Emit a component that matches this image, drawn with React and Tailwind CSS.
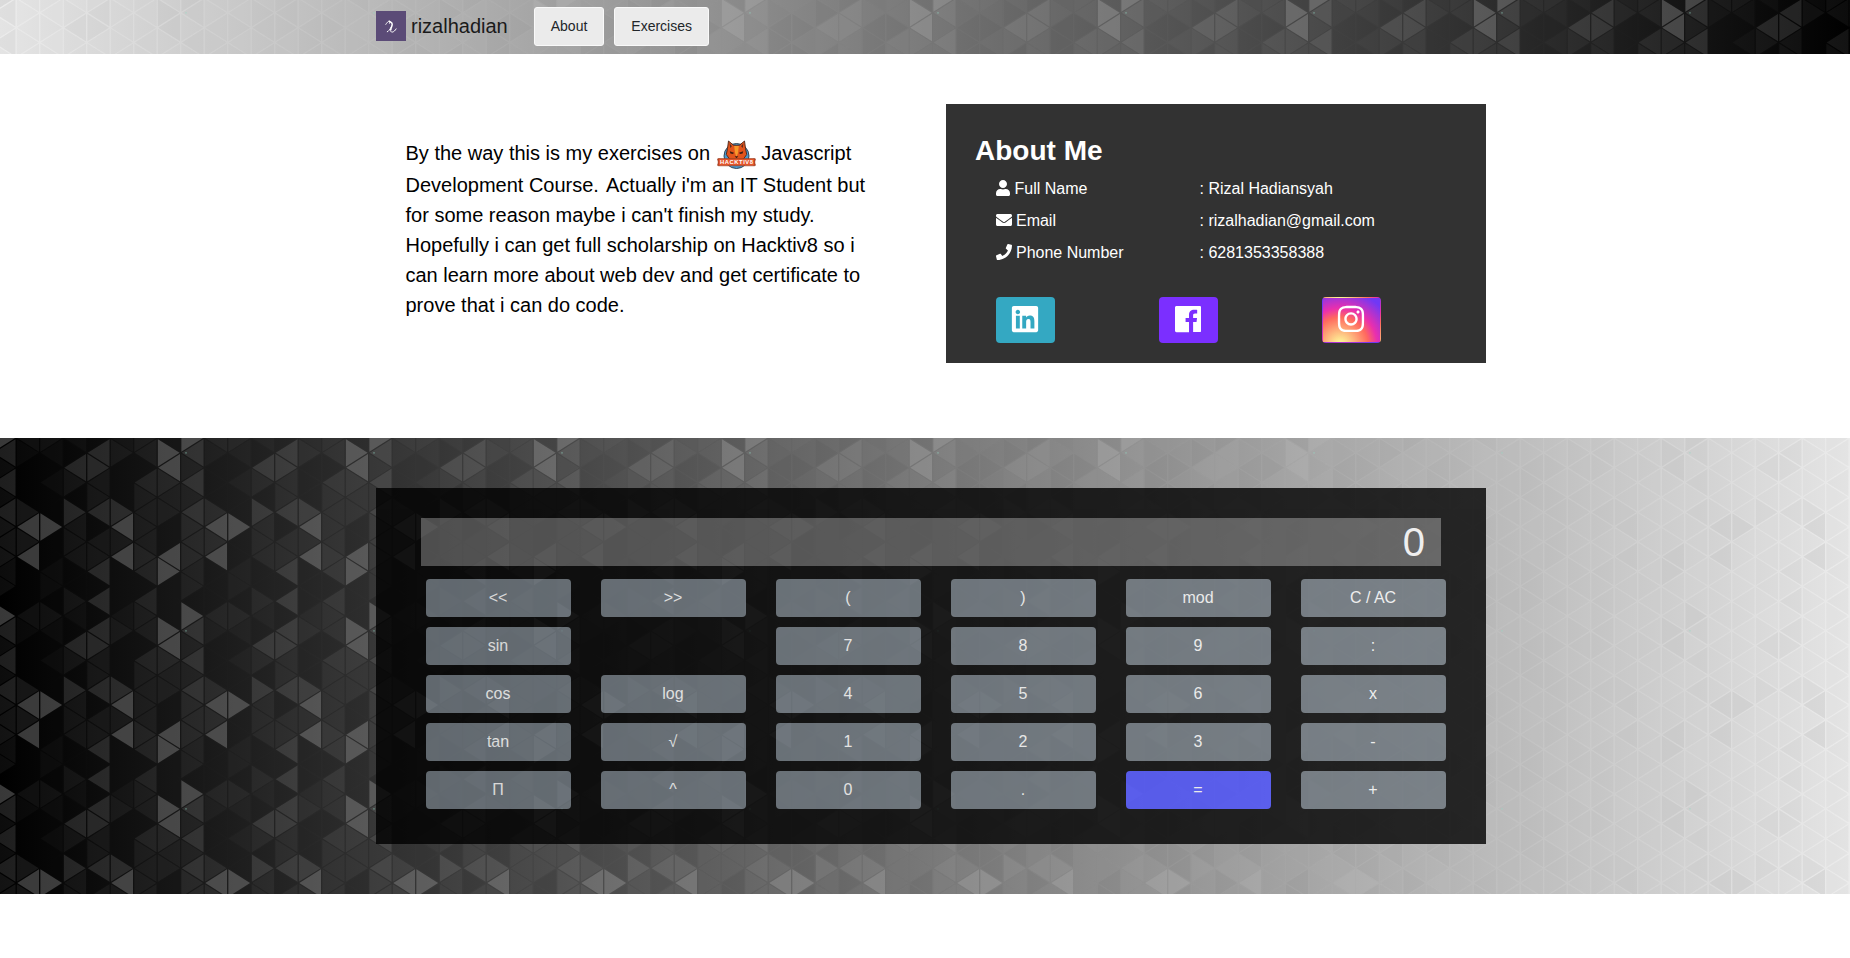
import { FaEnvelope, FaInstagram, FaLinkedin, FaPhone, FaUser } from "react-icons/fa";

/* Triangular mosaic: 8 columns x 12 triangles per tile, one brightness level each. */
const TILE_W = 188;
const TILE_H = 178;
const COL_W = 23.5;
const STEP = TILE_H / 12;
const FIRST_LINE = 16.2;

const MOSAIC = [
  "210003535000",
  "210100500110",
  "104204222002",
  "044224022404",
  "120004525000",
  "220322223303",
  "055322005500",
  "542424333220",
];

const LEVELS = [
  ["#000000", 0.03],
  ["#787878", 0.05],
  ["#8c8c8c", 0.085],
  ["#9c9c9c", 0.12],
  ["#a8a8a8", 0.18],
  ["#b4b4b4", 0.31],
];

function triangles() {
  const out = [];
  MOSAIC.forEach((col, c) => {
    for (let n = -1; n <= 12; n++) {
      const level = Number(col[(n + 12) % 12]);
      const pointsLeft = (c + n) % 2 === 0;
      const y = n * STEP;
      [0, -TILE_W].forEach((shift) => {
        const x0 = FIRST_LINE + c * COL_W + shift + 0.7;
        const x1 = x0 + COL_W - 1.4;
        if (x1 < 0 || x0 > TILE_W) return;
        const apex = pointsLeft ? x0 + 0.4 : x1 - 0.4;
        const base = pointsLeft ? x1 : x0;
        const h = STEP - 1.2;
        out.push(
          <polygon
            key={`${c}_${n}_${shift}`}
            points={`${apex},${y} ${base},${y - h} ${base},${y + h}`}
            fill={LEVELS[level][0]}
            fillOpacity={LEVELS[level][1]}
          />
        );
      });
    }
  });
  return out;
}

function Mosaic({ id, offset = 0 }) {
  return (
    <svg className="absolute inset-0 h-full w-full" aria-hidden="true">
      <defs>
        <pattern
          id={id}
          width={TILE_W}
          height={TILE_H}
          patternUnits="userSpaceOnUse"
          patternTransform={`translate(0 ${offset})`}
        >
          <rect width={TILE_W} height={TILE_H} fill="#000" fillOpacity="0.03" />
          {triangles()}
          <rect x="185" y="14.4" width="2" height="1" fill="#8fd9c4" fillOpacity="0.5" />
        </pattern>
      </defs>
      <rect width="100%" height="100%" fill={`url(#${id})`} />
    </svg>
  );
}

function BrandMark() {
  return (
    <svg width="30" height="30" viewBox="0 0 30 30" className="block">
      <rect width="30" height="30" fill="#5b4b77" />
      <g fill="none" stroke="#fff" strokeLinecap="round" strokeLinejoin="round">
        <path d="M9.8 13.400c1-1.700 2.600-3.300 3.500-3.300c.7 0 .5 1.200.2 2.200" strokeWidth="0.9" />
        <path d="M13.300 10.300c1.300 1 3.300 1 2.900 3.300c-.4 2-1.200 3.300-1.500 5" strokeWidth="1.500" />
        <path d="M14.700 18.600c-.3 1.600.2 2.600 1.500 2.500c1.500-.1 3-1.600 3.900-3.200M14.900 16.500c-1 2-2.300 4-3.600 4.300" strokeWidth="1" />
      </g>
    </svg>
  );
}

function HacktivLogo() {
  return (
    <svg
      viewBox="0 0 39 30"
      className="ml-[1px] inline-block h-[30px] w-[39px] align-middle"
      role="img"
      aria-label="Hacktiv8"
    >
      <circle cx="19.500" cy="16" r="12.500" fill="#4a9bd0" stroke="#2b3a4a" strokeWidth="0.900" />
      <path
        d="M11.500 1l5 4.200h6L27.500 1l1 7.500 1.200 6-3.200 4.500-7 3-7-3-3.200-4.500 1.200-6z"
        fill="#e2541c"
        stroke="#4a2418"
        strokeWidth="0.900"
      />
      <path d="M12.600 3.200l2.300 3-1.700 1.700zM26.400 3.200l-2.300 3 1.700 1.700z" fill="#5a2c20" />
      <path d="M17.200 6h4.600l-.8 7-1.500 4-1.500-4z" fill="#f79a2b" />
      <path d="M12.800 11.300l4.200 1.500-1 1.300-2.600-.7zM26.200 11.300L22 12.800l1 1.300 2.600-.7z" fill="#3a1c14" />
      <path d="M17.700 16.300h3.600l-1.800 1.900z" fill="#3a1c14" />
      <path d="M0.100 18.800h3v6.700h-3l1.200-3.300zM38.900 18.800h-3v6.700h3l-1.200-3.300z" fill="#a8371c" />
      <path d="M1.200 18.600h36.600v7.200h-36.600z" fill="#e4552b" stroke="#8d3a1c" strokeWidth="0.600" />
      <text
        x="19.500"
        y="24.300"
        textAnchor="middle"
        textLength="33"
        fontSize="5.800"
        fontWeight="700"
        fill="#fff"
        fontFamily="Liberation Sans, sans-serif"
      >
        HACKTIV8
      </text>
    </svg>
  );
}

function FacebookSquare() {
  return (
    <svg viewBox="0 0 448 512" className="h-[30px]" fill="currentColor">
      <path d="M448 56.7v398.5c0 13.7-11.100 24.700-24.700 24.700H309.100V306.500h58.200l8.700-67.600h-67v-43.200c0-19.600 5.400-32.900 33.500-32.900h35.800v-60.500c-6.200-.8-27.400-2.700-52.200-2.700-51.600 0-87 31.500-87 89.400v49.900h-58.400v67.600h58.400V480H24.700C11.100 480 0 468.900 0 455.300V56.700C0 43.100 11.100 32 24.700 32h398.500c13.700 0 24.800 11.100 24.800 24.700z" />
    </svg>
  );
}

const PROFILE = [
  { icon: FaUser, label: "Full Name", value: "Rizal Hadiansyah", margin: "-mx-[0.5px]" },
  { icon: FaEnvelope, label: "Email", value: "rizalhadian@gmail.com", margin: "ml-[0.5px]" },
  { icon: FaPhone, label: "Phone Number", value: "6281353358388", margin: "ml-[0.5px]" },
];

const KEYS = [
  "<<", ">>", "(", ")", "mod", "C / AC",
  "sin", null, "7", "8", "9", ":",
  "cos", "log", "4", "5", "6", "x",
  "tan", "√", "1", "2", "3", "-",
  "Π", "^", "0", ".", "=", "+",
];

const SOCIAL =
  "flex h-[46px] w-[59px] items-center justify-center rounded border border-transparent pr-[1px] pb-[2px] text-white";
const NAV = "h-[39px] rounded-[3px] border border-[#f9f9f9] bg-[#ebebeb] px-4 pb-[2px] text-sm text-[#212529]";

export default function App() {
  return (
    <div className="min-h-screen bg-white font-['Liberation_Sans',Arial,sans-serif] text-base text-black">
      <header className="relative h-[54px] overflow-hidden bg-[linear-gradient(to_right,#f4f4f4,#000)]">
        <Mosaic id="mosaic-header" offset={-2} />
        <nav className="relative ml-[376px] flex h-[53px] w-[1110px] items-center">
          <a className="flex items-center gap-[5px] pb-px text-xl leading-[30px] text-[#1a1a1a]">
            <BrandMark />
            <span className="-mt-px">rizalhadian</span>
          </a>
          <div className="ml-[26px] flex gap-[10px]">
            <button className={NAV}>About</button>
            <button className={NAV}>Exercises</button>
          </div>
        </nav>
      </header>

      <section className="ml-[376px] flex h-[384px] w-[1110px] items-start gap-[30px] pt-[50px]">
        <div className="w-[540px] pt-[34px] pl-[29.5px]">
          <p className="w-[475px] text-xl leading-[30px]">
            By the way this is my exercises on <HacktivLogo /> Javascript Development Course.{" "}
            <span className="ml-[1.5px]">Actually</span> i'm an IT Student but for some reason maybe i can't finish my
            study. Hopefully i can get full scholarship on Hacktiv8 so i can learn more about web dev and get
            certificate to prove that i can do code.
          </p>
        </div>

        <div className="h-[259px] w-[540px] bg-[#323232] px-[29px] pt-[30px] text-white">
          <h3 className="text-[28px] leading-[34px] font-bold">About Me</h3>
          <dl className="mt-[9px] ml-5">
            {PROFILE.map(({ icon: Icon, label, value, margin }) => (
              <div key={label} className="flex h-8 items-start leading-6">
                <dt className="w-[204.5px]">
                  <Icon className={`inline align-[-2px] ${margin}`} /> {label}
                </dt>
                <dd>: {value}</dd>
              </div>
            ))}
          </dl>
          <div className="mt-[24px] ml-[21px] flex gap-[104px]">
            <a className={`${SOCIAL} bg-[#34a8c2]`}>
              <FaLinkedin size={30} />
            </a>
            <a className={`${SOCIAL} bg-[#7b2fff]`}>
              <FacebookSquare />
            </a>
            <a
              className={`${SOCIAL} bg-[radial-gradient(circle_at_30%_107%,#fdf497_0%,#fdf497_5%,#ff6a5e_45%,#e92fae_60%,#7038f5_90%)]`}
            >
              <FaInstagram size={30} />
            </a>
          </div>
        </div>
      </section>

      <section className="relative h-[456px] bg-[linear-gradient(to_right,#000,#f4f4f4)] pt-[50px]">
        <Mosaic id="mosaic-calculator" />
        <div className="relative ml-[376px] h-[356px] w-[1110px] bg-black pt-[30px] pl-[45px] text-white opacity-80">
          <div className="flex h-[48px] w-[1020px] items-center justify-end bg-[#555] pr-[16px] text-[40px]">
            0
          </div>
          <div className="mt-[13px] ml-[5px] grid grid-cols-[repeat(6,145px)] gap-x-[30px] gap-y-[10px]">
            {KEYS.map((key, i) =>
              key === null ? (
                <span key={i} />
              ) : (
                <button
                  key={i}
                  className={`flex h-[38px] items-center justify-center rounded pr-[1px] ${
                    key === "=" ? "bg-[#4a4fff]" : "bg-[#6c757d]"
                  }`}
                >
                  {key}
                </button>
              )
            )}
          </div>
        </div>
      </section>
    </div>
  );
}
